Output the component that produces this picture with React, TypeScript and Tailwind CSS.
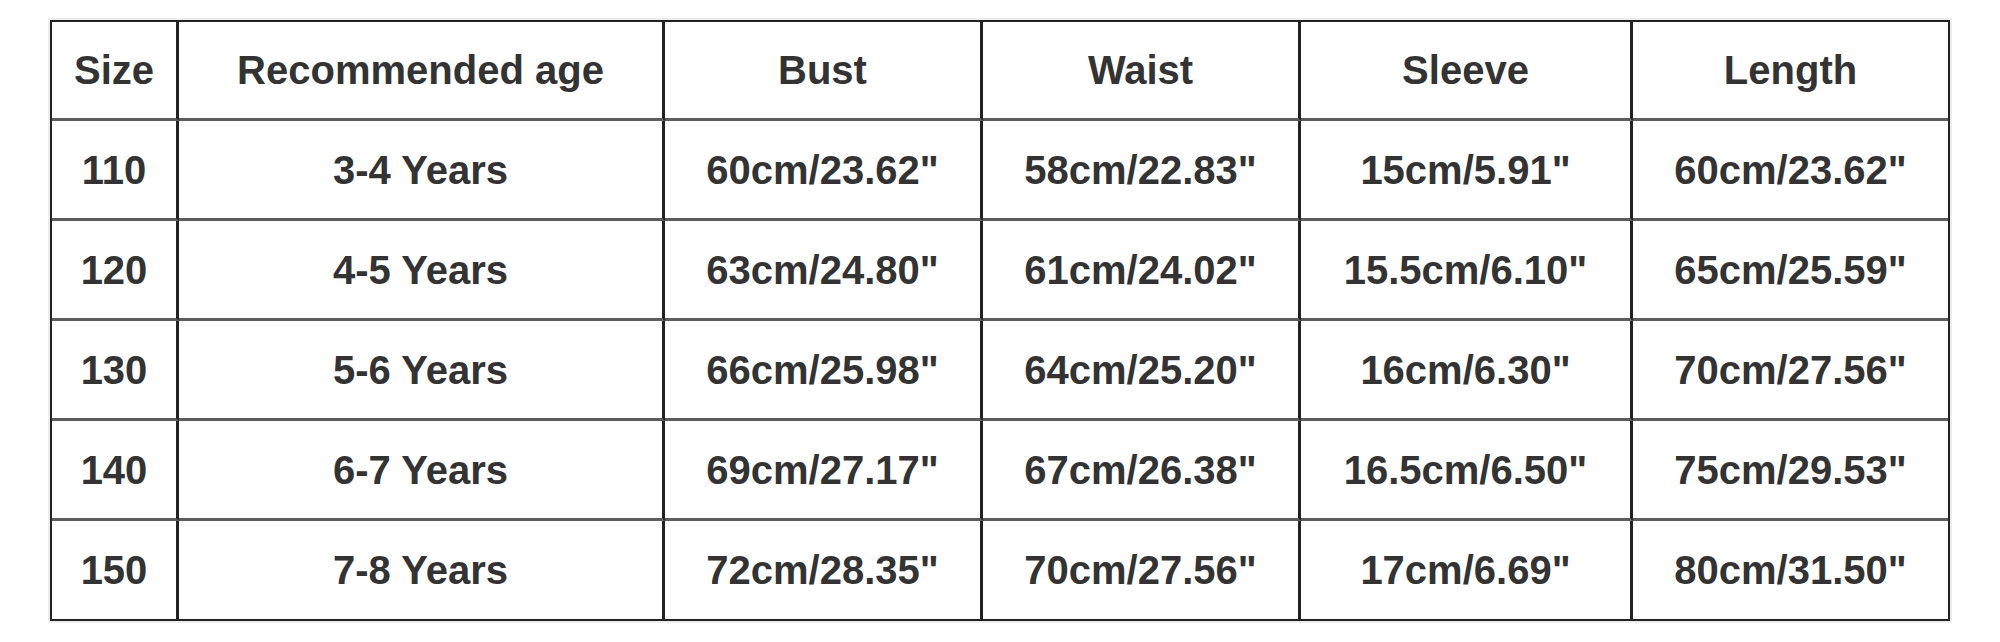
import React from "react";

const headers = ["Size", "Recommended age", "Bust", "Waist", "Sleeve", "Length"];
const rows = [
  ["110", "3-4 Years", "60cm/23.62\"", "58cm/22.83\"", "15cm/5.91\"", "60cm/23.62\""],
  ["120", "4-5 Years", "63cm/24.80\"", "61cm/24.02\"", "15.5cm/6.10\"", "65cm/25.59\""],
  ["130", "5-6 Years", "66cm/25.98\"", "64cm/25.20\"", "16cm/6.30\"", "70cm/27.56\""],
  ["140", "6-7 Years", "69cm/27.17\"", "67cm/26.38\"", "16.5cm/6.50\"", "75cm/29.53\""],
  ["150", "7-8 Years", "72cm/28.35\"", "70cm/27.56\"", "17cm/6.69\"", "80cm/31.50\""],
];

export default function App() {
  const all = [headers, ...rows];
  return (
    <div className="w-[2000px] h-[642px] bg-white pl-[50px] pt-[20px]">
      <div
        className="w-[1900px] h-[601px] border-2 border-[#222] grid grid-cols-[127px_486px_318px_318px_332px_315px] grid-rows-[99px_100px_100px_100px_100px_98px] shadow-[0_0_0_2px_#ececec]"
        style={{ fontFamily: '"Liberation Sans", Arial, sans-serif' }}
      >
        {all.map((r, ri) =>
          r.map((c, ci) => (
            <div
              key={`${ri}-${ci}`}
              className={`flex items-center justify-center text-[40px] font-bold text-[#333] leading-none ${
                ci < 5 ? "border-r-[3px] border-r-[#222]" : ""
              } ${ri < 5 ? "border-b-[3px] border-b-[#5c5c5c]" : ""}`}
            >
              {c}
            </div>
          ))
        )}
      </div>
    </div>
  );
}
